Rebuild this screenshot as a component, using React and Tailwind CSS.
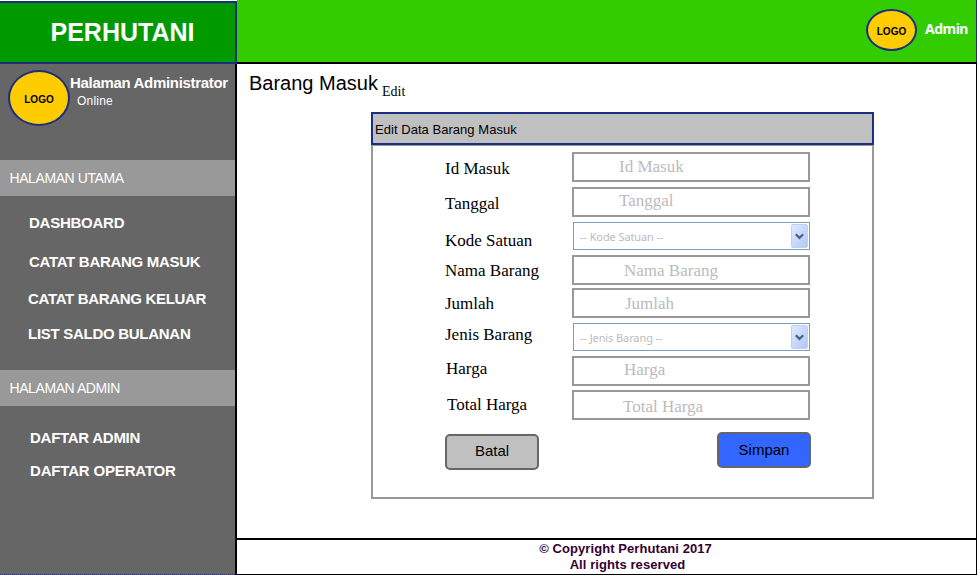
import React from "react";

const sans = "font-['Liberation_Sans',Arial,sans-serif]";
const serif = "font-['Liberation_Serif','Times_New_Roman',serif]";

const mainMenu = [
  { label: "DASHBOARD", cls: "mt-[17px] ml-[29px] tracking-[-0.25px]" },
  { label: "CATAT BARANG MASUK", cls: "mt-[19px] ml-[29px] tracking-[-0.3px]" },
  { label: "CATAT BARANG KELUAR", cls: "mt-[17px] ml-[28px] tracking-[-0.32px]" },
  { label: "LIST SALDO BULANAN", cls: "mt-[15px] ml-[28px] tracking-[-0.28px]" },
];

const adminMenu = [
  { label: "DAFTAR ADMIN", cls: "mt-[22px] ml-[30px] tracking-[-0.27px]" },
  { label: "DAFTAR OPERATOR", cls: "mt-[13px] ml-[30px] tracking-[-0.17px]" },
];

const fields = [
  { label: "Id Masuk", row: "h-[35px]", lab: "pt-[6px]", ph: "pt-[2px] pl-[45px]" },
  { label: "Tanggal", row: "h-[35px]", lab: "pt-[6px]", ph: "pt-px pl-[45px]" },
  { label: "Kode Satuan", row: "h-[33px]", lab: "pt-[8px]", select: true },
  { label: "Nama Barang", row: "h-[33px]", lab: "pt-[5px]", ph: "pt-[3px] pl-[50px]" },
  { label: "Jumlah", row: "h-[35px]", lab: "pt-[5px]", ph: "pt-[3px] pl-[51px]" },
  { label: "Jenis Barang", row: "h-[33px]", lab: "pt-px", select: true },
  { label: "Harga", row: "h-[34px]", lab: "pt-[2px] pl-px", ph: "pt-px pl-[50px]" },
  { label: "Total Harga", row: "h-[30px]", lab: "pt-[4px] pl-[2px]", ph: "pt-[4px] pl-[49px]" },
];

function MenuItem({ label, cls }) {
  return <a className={`block h-5 text-[15px] leading-5 font-bold text-white ${cls}`}>{label}</a>;
}

function SectionBar({ children }) {
  return (
    <div className="h-9 bg-[#999999] pl-[9.5px] text-[14px] leading-9 tracking-[-0.42px] text-white">{children}</div>
  );
}

function Logo({ className }) {
  return (
    <div
      className={`flex shrink-0 items-center justify-center rounded-[50%] border-2 border-[#1a2f80] bg-[#ffcc00] text-[10px] leading-3 font-bold text-black ${className}`}
    >
      LOGO
    </div>
  );
}

function SelectBox({ label }) {
  return (
    <div className="ml-px flex h-7 w-[237px] items-start justify-between border border-[#7f9db9] bg-white p-px pl-[6px]">
      <span className="pt-[3px] font-['Noto_Sans',sans-serif] text-[11px] leading-5 tracking-[-0.1px] text-[#bbbbbb]">
        -- {label} --
      </span>
      <span className="flex h-6 w-[17px] items-center justify-center rounded-[2px] border border-[#c0d0f4] bg-linear-to-br from-[#dfe9ff] to-[#b0c8f8]">
        <svg width="9" height="7" viewBox="0 0 9 7" fill="none" stroke="#4d6185" strokeWidth="2.2">
          <path d="M0.8 1.2 L4.5 4.9 L8.2 1.2" />
        </svg>
      </span>
    </div>
  );
}

function Field({ f }) {
  return (
    <div className={`flex items-start ${f.row}`}>
      <label className={`block w-[127px] text-[17px] leading-[22px] whitespace-nowrap text-black ${serif} ${f.lab}`}>
        {f.label}
      </label>
      {f.select ? (
        <SelectBox label={f.label} />
      ) : (
        <div
          className={`h-[30px] w-[238px] border-2 border-[#999999] bg-white text-[17px] leading-[22px] text-[#bbbbbb] ${serif} ${f.ph}`}
        >
          {f.label}
        </div>
      )}
    </div>
  );
}

export default function App() {
  return (
    <div className={`flex h-[575px] w-[977px] overflow-hidden bg-white whitespace-nowrap ${sans}`}>
      <aside className="flex w-[237px] shrink-0 flex-col">
        <div className="mt-px h-[63px] border-y-2 border-r-2 border-[#1a2f80] bg-[#009900] pt-[13px] pl-[50.5px] text-[25px] leading-8 font-bold text-white">
          PERHUTANI
        </div>
        <div className="flex flex-1 flex-col border-r-2 border-black bg-[#666666]">
          <div className="flex h-24 items-start pt-[6px] pl-[8px]">
            <Logo className="h-14 w-[62px] pt-[3px]" />
            <div className="pt-[3px]">
              <div className="text-[15px] leading-5 font-bold tracking-[-0.32px] text-white">Halaman Administrator</div>
              <div className="pl-[7px] text-[12px] leading-4 tracking-[0.2px] text-white">Online</div>
            </div>
          </div>
          <SectionBar>HALAMAN UTAMA</SectionBar>
          <nav className="h-[174px]">
            {mainMenu.map((m) => (
              <MenuItem key={m.label} {...m} />
            ))}
          </nav>
          <SectionBar>HALAMAN ADMIN</SectionBar>
          <nav className="flex-1 border-b border-dotted border-[#1a2f80]">
            {adminMenu.map((m) => (
              <MenuItem key={m.label} {...m} />
            ))}
          </nav>
        </div>
      </aside>

      <div className="flex w-[740px] flex-col">
        <header className="flex h-16 items-start justify-end border-b-2 border-black bg-[#33cc00]">
          <Logo className="mt-[9px] h-[42px] w-[51px] pt-[3px]" />
          <div className="flex h-[62px] w-[60px] border-r border-[#1a2f80] pt-[19px] pl-[8px] font-['Noto_Sans',sans-serif] text-[14px] leading-5 font-bold tracking-[-0.5px] text-white">
            Admin
          </div>
        </header>

        <main className="h-[474px] border-r border-black">
          <div className="flex h-12 items-start pt-[7px] pl-[12px] text-black">
            <h1 className="text-[20px] leading-6">Barang Masuk</h1>
            <span className={`pt-[11px] pl-[4px] text-[14px] leading-5 ${serif}`}>Edit</span>
          </div>
          <section className="ml-[134px] w-[503px]">
            <h2 className="h-[33px] border-2 border-[#1a2f80] bg-[#c0c0c0] pt-[6px] pl-[2px] text-[13px] leading-5 tracking-[0.04px] text-black">
              Edit Data Barang Masuk
            </h2>
            <div className="h-[354px] border-2 border-t border-[#999999] pt-[6px] pl-[72px]">
              {fields.map((f) => (
                <Field key={f.label} f={f} />
              ))}
              <div className="mt-[12px] flex w-[366px] items-start justify-between">
                <button className="mt-[2px] h-9 w-[94px] rounded-[5px] border-2 border-[#666666] bg-[#c0c0c0] pb-[2px] text-[15px] leading-5 text-black">
                  Batal
                </button>
                <button className="h-9 w-[94px] rounded-[5px] border-2 border-[#666666] bg-[#3366ff] text-[15px] leading-5 text-black">
                  Simpan
                </button>
              </div>
            </div>
          </section>
        </main>

        <footer className="h-[37px] border-t-2 border-r border-b border-black pt-px pl-[38px] text-center text-[13px] leading-4 font-bold tracking-[0.08px] text-[#330033]">
          <div>© Copyright Perhutani 2017</div>
          <div className="pl-[4px]">All rights reserved</div>
        </footer>
      </div>
    </div>
  );
}
